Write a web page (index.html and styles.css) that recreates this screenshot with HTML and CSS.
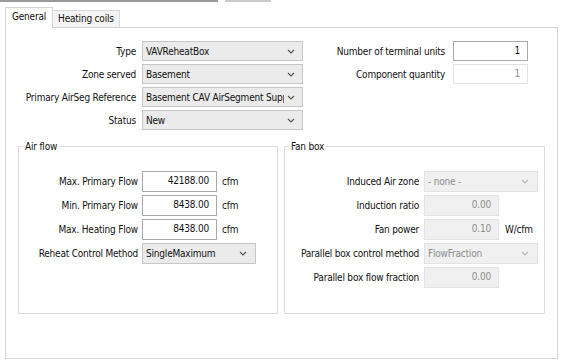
FILE: index.html
```html
<!DOCTYPE html>
<html lang="en">
<head>
	<meta charset="UTF-8">
	<meta name="viewport" content="width=device-width, initial-scale=1.0">
	<title>Terminal unit</title>
	<link rel="stylesheet" href="styles.css">
</head>
<body>
	<div class="strips">
		<div class="strip dark"></div>
		<div class="strip light"></div>
	</div>
	<div class="page">
		<div class="tabs">
			<div class="tab active">General</div>
			<div class="tab">Heating coils</div>
		</div>
		<div class="panel">
			<div class="top">
				<div class="form main-form">
					<label>Type</label>
					<div class="combo"><span>VAVReheatBox</span><svg viewBox="0 0 8 5"><path d="M1 1 L4 4 L7 1"/></svg></div>
					<label>Zone served</label>
					<div class="combo"><span>Basement</span><svg viewBox="0 0 8 5"><path d="M1 1 L4 4 L7 1"/></svg></div>
					<label>Primary AirSeg Reference</label>
					<div class="combo"><span>Basement CAV AirSegment Suppl</span><svg viewBox="0 0 8 5"><path d="M1 1 L4 4 L7 1"/></svg></div>
					<label>Status</label>
					<div class="combo"><span>New</span><svg viewBox="0 0 8 5"><path d="M1 1 L4 4 L7 1"/></svg></div>
				</div>
				<div class="form units-form">
					<label>Number of terminal units</label>
					<div class="field">1</div>
					<label>Component quantity</label>
					<div class="field off">1</div>
				</div>
			</div>
			<div class="groups">
				<fieldset class="group air">
					<legend>Air flow</legend>
					<div class="form">
						<label>Max. Primary Flow</label>
						<div class="field">42188.00</div>
						<span class="unit">cfm</span>
						<label>Min. Primary Flow</label>
						<div class="field">8438.00</div>
						<span class="unit">cfm</span>
						<label>Max. Heating Flow</label>
						<div class="field">8438.00</div>
						<span class="unit">cfm</span>
						<label>Reheat Control Method</label>
						<div class="combo wide"><span>SingleMaximum</span><svg viewBox="0 0 8 5"><path d="M1 1 L4 4 L7 1"/></svg></div>
					</div>
				</fieldset>
				<fieldset class="group fan">
					<legend>Fan box</legend>
					<div class="form">
						<label>Induced Air zone</label>
						<div class="combo wide off"><span>- none -</span><svg viewBox="0 0 8 5"><path d="M1 1 L4 4 L7 1"/></svg></div>
						<label>Induction ratio</label>
						<div class="field off grey">0.00</div>
						<span class="unit"></span>
						<label>Fan power</label>
						<div class="field off grey">0.10</div>
						<span class="unit">W/cfm</span>
						<label>Parallel box control method</label>
						<div class="combo wide off"><span>FlowFraction</span><svg viewBox="0 0 8 5"><path d="M1 1 L4 4 L7 1"/></svg></div>
						<label>Parallel box flow fraction</label>
						<div class="field off grey">0.00</div>
						<span class="unit"></span>
					</div>
				</fieldset>
			</div>
		</div>
	</div>
</body>
</html>
```

FILE: styles.css
```css
body {
	margin: 0;
	background-color: #fff;
	font-family: "DejaVu Sans Condensed", "Liberation Sans", sans-serif;
	font-size: 10px;
	letter-spacing: -0.2px;
	color: #111;
}

.strips {
	display: flex;
	gap: 7px;
}

.strip {
	height: 2px;
}

.strip.dark {
	width: 218px;
	background-color: #9a9a9a;
}

.strip.light {
	width: 46px;
	background-color: #c9c9c9;
}

.page {
	padding: 5px 0 0 5px;
}

.tabs {
	display: flex;
	align-items: flex-end;
	height: 20px;
	position: relative;
	z-index: 1;
}

.tab {
	height: 16px;
	line-height: 15px;
	padding: 0 5px;
	border: 1px solid #d9d9d9;
	border-bottom: none;
	background-color: #f4f4f4;
	margin-left: -1px;
}

.tab.active {
	height: 20px;
	line-height: 17px;
	margin-left: 0;
	padding: 0 6px;
	background-color: #fff;
	border-color: #d4d4d4;
	position: relative;
	top: 1px;
}

.panel {
	width: 553px;
	height: 332px;
	box-sizing: border-box;
	border: 1px solid #d4d4d4;
	padding-top: 13px;
}

.top {
	display: flex;
}

.form {
	display: grid;
	align-items: center;
	row-gap: 3px;
}

.form label {
	text-align: right;
	white-space: nowrap;
}

.main-form {
	grid-template-columns: 130px 161px;
	column-gap: 6px;
	grid-auto-rows: 20px;
}

.units-form {
	margin-left: 7px;
	grid-template-columns: 135px 75px;
	column-gap: 8px;
	grid-auto-rows: 20px;
}

.combo {
	height: 100%;
	box-sizing: border-box;
	display: flex;
	align-items: center;
	gap: 3px;
	padding: 0 7px 0 3px;
	border: 1px solid #c6c6c6;
	background-color: #ebebeb;
}

.combo span {
	flex: 1;
	overflow: hidden;
	white-space: nowrap;
}

.combo svg {
	width: 8px;
	height: 5px;
	flex-shrink: 0;
}

.combo path {
	fill: none;
	stroke: #555;
	stroke-width: 1.2;
}

.combo.off {
	background-color: #f0f0f0;
	border-color: #e2e2e2;
	color: #8c8c8c;
}

.combo.off path {
	stroke: #b8b8b8;
}

.field {
	height: 100%;
	box-sizing: border-box;
	border: 1px solid #a9a9a9;
	background-color: #fff;
	text-align: right;
	padding: 0 7px;
	line-height: 18px;
}

.field.off {
	border-color: #e3e3e3;
	color: #8c8c8c;
}

.field.grey {
	background-color: #f0f0f0;
	line-height: 17px;
}

.groups {
	display: flex;
	gap: 6px;
	margin: 10px 11px 0 12px;
}

.group {
	margin: 0;
	border: 1px solid #dcdcdc;
	padding: 18px 0 0 0;
	height: 174px;
	box-sizing: border-box;
}

.group legend {
	margin-left: 4px;
	padding: 0 2px;
	line-height: 13px;
}

.group .form {
	grid-auto-rows: 21px;
	row-gap: 3px;
	column-gap: 4px;
}

.air {
	width: 260px;
}

.air .form {
	grid-template-columns: 119px 75px auto;
}

.fan {
	width: 261px;
}

.fan .form {
	grid-template-columns: 134px 75px auto;
	column-gap: 5px;
}

.combo.wide {
	grid-column: span 2;
	width: 114px;
	padding-right: 8px;
}

.unit {
	padding-left: 1px;
}
```
